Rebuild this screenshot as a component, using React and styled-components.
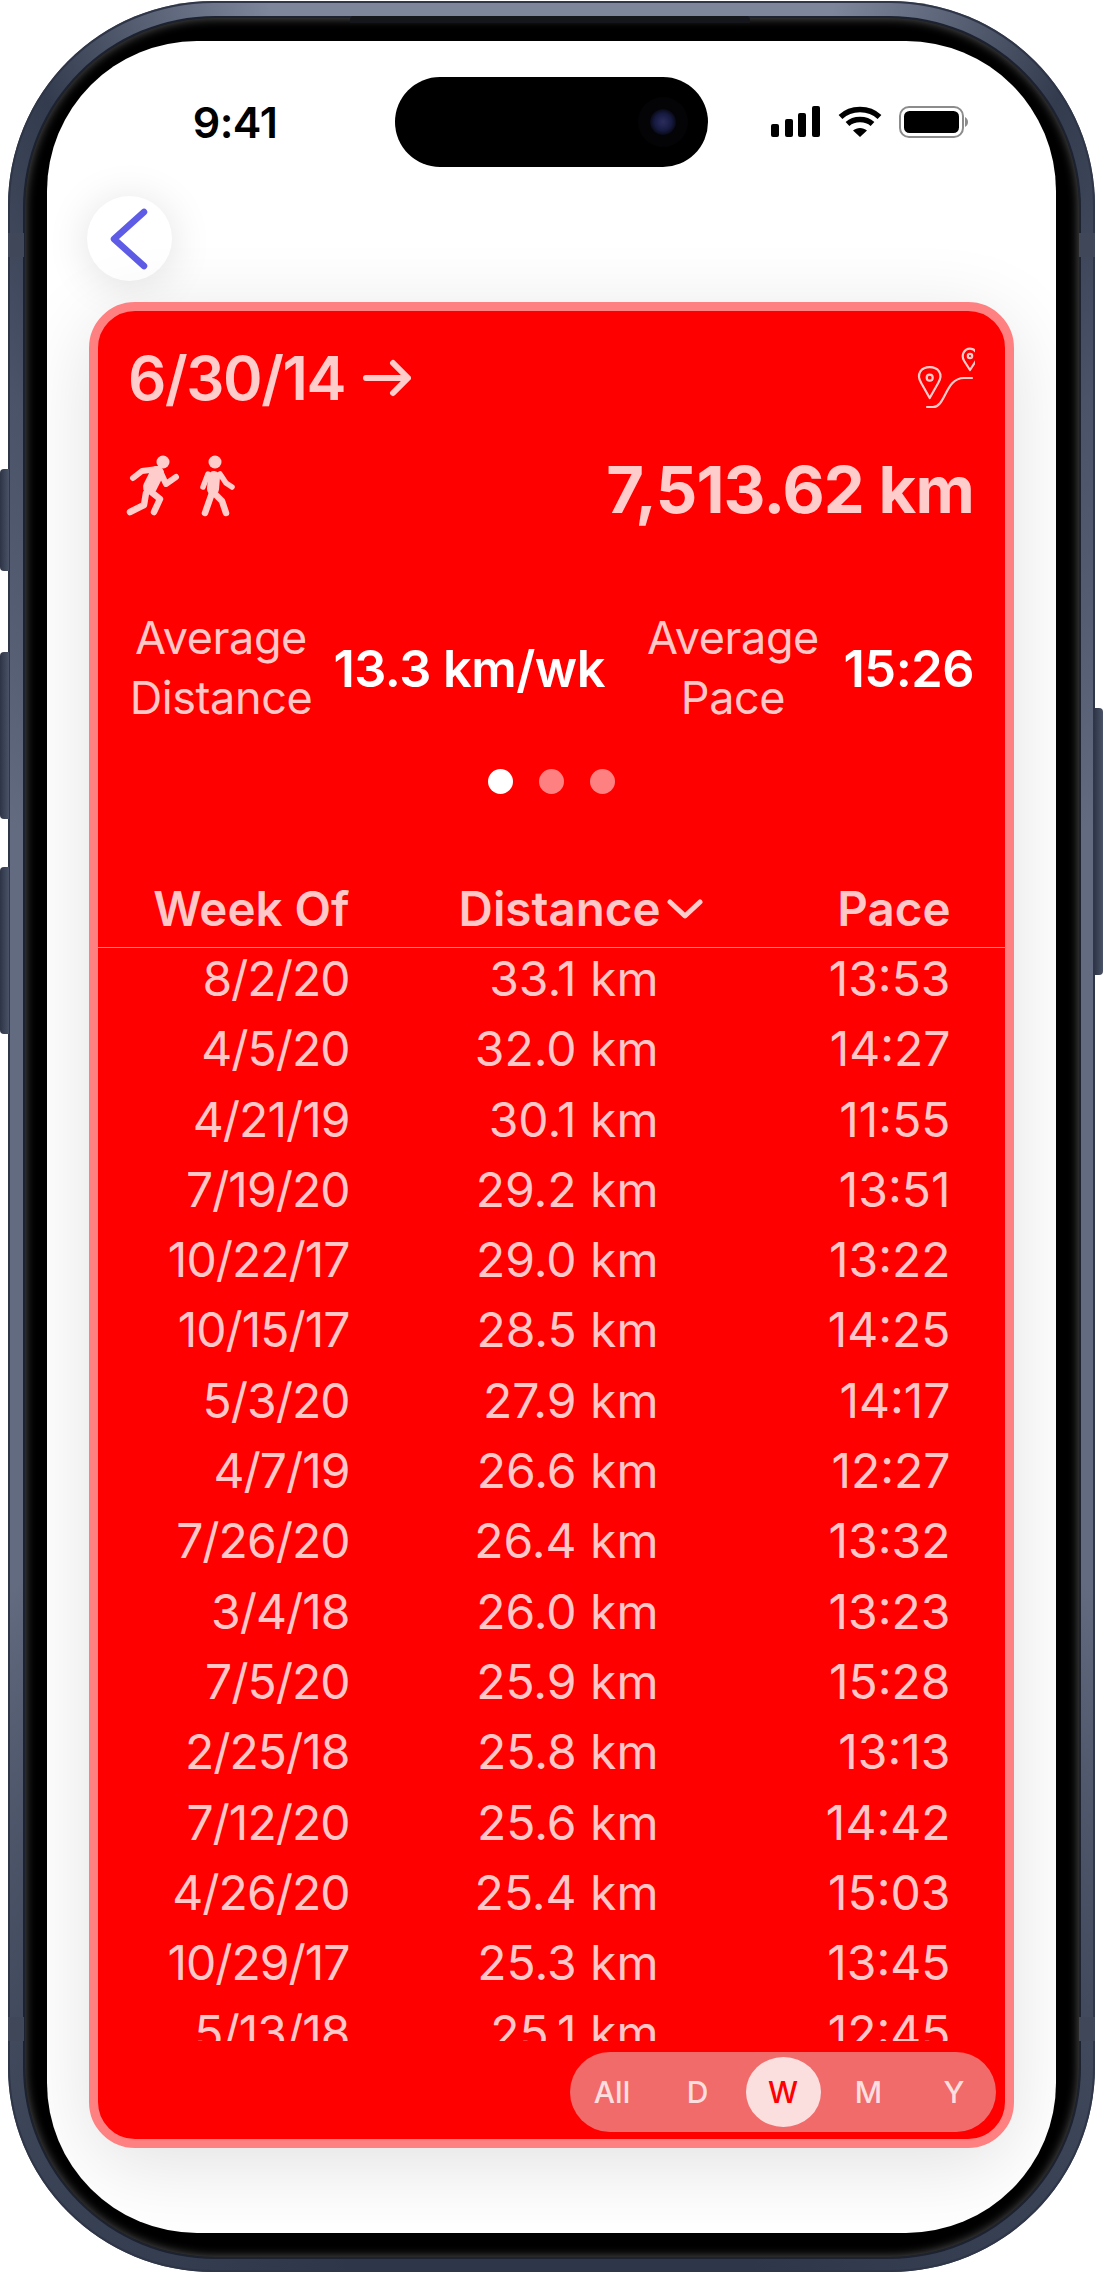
import React from "react";
import styled, { createGlobalStyle } from "styled-components";

const GlobalStyle = createGlobalStyle`
  html, body {
    margin: 0;
    background: #fff;
    font-family: "Inter", "Liberation Sans", sans-serif;
    -webkit-font-smoothing: antialiased;
  }
`;

const Phone = styled.div`
  position: relative;
  box-sizing: border-box;
  width: 1087px;
  height: 2271px;
  margin: 1px 0 3px 8px;
  padding: 17px 16px 15px 17px;
  border-radius: 205px;
  background: conic-gradient(
    from 0deg,
    #7d869b 0deg, #7d869b 14deg, #333b4e 26deg, #4a5368 36deg, #626b7f 60deg, #626b7f 130deg,
    #3c4558 152deg, #2e364a 170deg, #2e364a 190deg, #3c4558 208deg, #626b7f 230deg, #626b7f 300deg,
    #4a5368 324deg, #333b4e 334deg, #7d869b 346deg, #7d869b 360deg
  );
  box-shadow: inset 0 0 0 2px #2f3648;
`;

const SideButton = styled.div`
  position: absolute;
  top: ${props => props.$top}px;
  ${props => (props.$right ? "right: -8px;" : "left: -8px;")}
  width: 9px;
  height: ${props => props.$height}px;
  background: linear-gradient(90deg, #2d3446, #4a5367);
  border-radius: ${props => (props.$right ? "0 4px 4px 0" : "4px 0 0 4px")};
`;

const AntennaBand = styled.div`
  position: absolute;
  top: ${props => props.$top}px;
  ${props => (props.$right ? "right: 0;" : "left: 0;")}
  width: 16px;
  height: 24px;
  background: #3f4759;
`;

const SpeakerSlit = styled.div`
  position: absolute;
  top: 15px;
  left: 342px;
  width: 400px;
  height: 7px;
  background: #14161b;
  border-radius: 4px 4px 0 0;
`;

const Bezel = styled.div`
  box-sizing: border-box;
  width: 100%;
  height: 100%;
  padding: 23px 23px 24px 22px;
  background: #000;
  border-radius: 190px;
  box-shadow: 0 0 0 2px #1c2230, inset 0 0 10px 1px rgba(110, 110, 110, 0.7);
`;

const Screen = styled.div`
  height: 100%;
  display: flex;
  flex-direction: column;
  background: #fff;
  border-radius: 150px;
  overflow: hidden;
`;

const StatusBar = styled.div`
  display: grid;
  grid-template-columns: 348px 313px 348px;
  height: 90px;
  padding-top: 36px;
  align-items: center;
`;

const Clock = styled.div`
  padding-left: 28px;
  text-align: center;
  font-size: 43px;
  font-weight: 600;
  color: #000;
  letter-spacing: -0.5px;
`;

const Island = styled.div`
  height: 90px;
  display: flex;
  justify-content: flex-end;
  align-items: center;
  padding-right: 32px;
  background: #000;
  border-radius: 45px;
`;

const Lens = styled.div`
  width: 26px;
  height: 26px;
  border-radius: 50%;
  background: radial-gradient(circle, #2a2d5c 0%, #171b42 45%, #06070f 75%, #000 100%);
  box-shadow: 0 0 0 12px #040407;
`;

const StatusIcons = styled.div`
  display: flex;
  align-items: center;
  gap: 17px;
  padding-left: 60px;
`;

const BackButton = styled.div`
  display: flex;
  align-items: center;
  justify-content: center;
  width: 85px;
  height: 85px;
  margin: 29px 0 21px 40px;
  border-radius: 50%;
  background: #fff;
  box-shadow: 0 4px 44px rgba(0, 0, 0, 0.12);
`;

const Card = styled.div`
  position: relative;
  box-sizing: border-box;
  width: 925px;
  height: 1846px;
  margin-left: 42px;
  border: 9px solid #ff8080;
  border-radius: 46px;
  background: #ff0000;
  box-shadow: 0 16px 80px rgba(0, 0, 0, 0.12);
  overflow: hidden;
`;

const TitleRow = styled.div`
  display: flex;
  justify-content: space-between;
  align-items: center;
  height: 68px;
  margin-top: 33px;
  padding: 0 30px;
`;

const DateRange = styled.div`
  display: flex;
  align-items: center;
  gap: 18px;
  font-size: 60px;
  font-weight: 600;
  letter-spacing: -1.4px;
  color: rgba(255, 255, 255, 0.8);
`;

const TotalRow = styled.div`
  display: flex;
  justify-content: space-between;
  align-items: center;
  height: 70px;
  margin-top: 42px;
  padding: 0 31px 0 27px;
`;

const TotalValue = styled.div`
  font-size: 65px;
  font-weight: 700;
  letter-spacing: -0.8px;
  color: rgba(255, 255, 255, 0.8);
`;

const AverageRow = styled.div`
  display: grid;
  grid-template-columns: 184px 292px 256px 113px;
  align-items: center;
  margin-top: 84px;
  padding: 0 31px;
`;

const AverageLabel = styled.div`
  text-align: center;
  font-size: 45px;
  line-height: 60px;
  letter-spacing: -0.4px;
  color: rgba(255, 255, 255, 0.8);
`;

const AverageValue = styled.div`
  justify-self: end;
  white-space: nowrap;
  font-size: 50.5px;
  font-weight: 600;
  letter-spacing: -0.5px;
  color: #fff;
`;

const Dots = styled.div`
  display: flex;
  justify-content: center;
  gap: 26px;
  margin-top: 41px;
`;

const Dot = styled.div`
  width: 25px;
  height: 25px;
  border-radius: 50%;
  background: ${props => (props.$active ? "#fff" : "#ff8080")};
`;

const TableGrid = styled.div`
  display: grid;
  grid-template-columns: 251.5px 309px 292px;
  text-align: right;
  font-size: 48px;
  color: rgba(255, 255, 255, 0.8);
`;

const HeaderRow = styled(TableGrid)`
  height: 73px;
  padding-bottom: 2px;
  margin-top: 78px;
  align-items: center;
  font-size: 47.5px;
  font-weight: 600;
  border-bottom: 1px solid rgba(255, 255, 255, 0.5);
`;

const SortedHeader = styled.div`
  display: flex;
  justify-content: flex-end;
  align-items: center;
  gap: 6px;
  margin-right: -44px;
`;

const RowList = styled.div`
  height: 1097px;
  margin-top: -4px;
  overflow: hidden;
`;

const DataRow = styled(TableGrid)`
  height: 70.3px;
  line-height: 70.3px;
`;

const WeekCell = styled.div`
  letter-spacing: -1px;
`;

const RangePicker = styled.div`
  position: absolute;
  right: 9px;
  bottom: 7px;
  display: flex;
  align-items: center;
  gap: 10.5px;
  box-sizing: border-box;
  width: 426px;
  height: 80px;
  padding-left: 4.5px;
  border-radius: 40px;
  background: #f26b6b;
`;

const RangeItem = styled.div`
  flex: 0 0 75px;
  display: flex;
  align-items: center;
  justify-content: center;
  height: 70px;
  border-radius: 50%;
  font-size: 30px;
  font-weight: 500;
  color: ${props => (props.$active ? "#ff0000" : "rgba(255, 255, 255, 0.8)")};
  background: ${props => (props.$active ? "#fbdfdf" : "transparent")};
`;

const rows = [
  ["8/2/20", "33.1 km", "13:53"],
  ["4/5/20", "32.0 km", "14:27"],
  ["4/21/19", "30.1 km", "11:55"],
  ["7/19/20", "29.2 km", "13:51"],
  ["10/22/17", "29.0 km", "13:22"],
  ["10/15/17", "28.5 km", "14:25"],
  ["5/3/20", "27.9 km", "14:17"],
  ["4/7/19", "26.6 km", "12:27"],
  ["7/26/20", "26.4 km", "13:32"],
  ["3/4/18", "26.0 km", "13:23"],
  ["7/5/20", "25.9 km", "15:28"],
  ["2/25/18", "25.8 km", "13:13"],
  ["7/12/20", "25.6 km", "14:42"],
  ["4/26/20", "25.4 km", "15:03"],
  ["10/29/17", "25.3 km", "13:45"],
  ["5/13/18", "25.1 km", "12:45"],
];

const SignalIcon = () => (
  <svg width="53" height="32" viewBox="0 0 53 32" fill="#000">
    <rect x="3" y="18" width="8" height="13" rx="2" />
    <rect x="17" y="13" width="8" height="18" rx="2" />
    <rect x="30" y="7" width="8" height="24" rx="2" />
    <rect x="44" y="0" width="8" height="31" rx="2" />
  </svg>
);

const WifiIcon = () => (
  <svg width="44" height="32" viewBox="0 0 44 32" fill="none" stroke="#000" strokeWidth="5.5">
    <path d="M2.5 11 C13 1 31 1 41.5 11" />
    <path d="M9.5 18 C16 12 28 12 34.5 18" />
    <path d="M22 31 L15 24.5 C19 21 25 21 29 24.5 Z" fill="#000" stroke="none" />
  </svg>
);

const BatteryIcon = () => (
  <svg width="70" height="32" viewBox="0 0 70 32">
    <rect x="1" y="1" width="63" height="30" rx="9" fill="none" stroke="#8c8c8c" strokeWidth="2" />
    <rect x="5" y="5" width="55" height="22" rx="5.5" fill="#000" />
    <path d="M66 11 C68 12 69 14 69 16 C69 18 68 20 66 21 Z" fill="#8c8c8c" />
  </svg>
);

const BackChevron = () => (
  <svg width="40" height="62" viewBox="0 0 40 62" fill="none" stroke="#5e5ce6" strokeWidth="6.5" strokeLinecap="round" strokeLinejoin="round">
    <path d="M34 4 L4 31 L34 58" />
  </svg>
);

const RouteIcon = () => (
  <svg width="62" height="65" viewBox="20 15 62 65" fill="none" stroke="#fff" strokeOpacity="0.8" strokeWidth="2.2">
    <path d="M36.7 67 L28.2 52 C22.5 42 29 36.2 36.7 36.2 C44.4 36.2 51 42 45.2 52 Z" strokeLinejoin="round" />
    <circle cx="36.7" cy="46.7" r="3" />
    <path d="M77 39 L71.2 30 C67.5 24 71.5 17.6 77 17.6 C82.5 17.6 86.5 24 82.8 30 Z" strokeLinejoin="round" />
    <circle cx="77" cy="25" r="2.2" />
    <path d="M34 76 H40 C53 76 52 47 71 47 H79" strokeLinecap="round" />
  </svg>
);

const ActivityIcon = () => (
  <svg width="115" height="68" viewBox="25 28 115 68" fill="none" stroke="#ffcccc" strokeLinecap="round" strokeLinejoin="round">
    <circle cx="63" cy="35" r="6.5" fill="#ffcccc" stroke="none" />
    <path d="M33 51 L42 44 L58 42" strokeWidth="6" />
    <path d="M57 46 L50 60" strokeWidth="14" />
    <path d="M60 44 L66 57 L76 50" strokeWidth="6" />
    <path d="M46 66 L44 78 L30 85" strokeWidth="6.5" />
    <path d="M50 64 L60 72 L54 85" strokeWidth="6.5" />
    <circle cx="115" cy="35" r="6.5" fill="#ffcccc" stroke="none" />
    <path d="M114 50 L113 62" strokeWidth="12" />
    <path d="M108 47 L103 60" strokeWidth="5.5" />
    <path d="M120 47 L126 56 L132 60" strokeWidth="5.5" />
    <path d="M112 66 L105 86" strokeWidth="6.5" />
    <path d="M114 66 L122 74 L126 86" strokeWidth="6.5" />
  </svg>
);

const ArrowRight = () => (
  <svg width="48" height="42" viewBox="0 0 48 42" fill="none" stroke="#ffcccc" strokeWidth="6" strokeLinecap="round" strokeLinejoin="round">
    <path d="M3 21 H44 M30 6 L45 21 L30 36" />
  </svg>
);

const SortChevron = () => (
  <svg width="36" height="20" viewBox="0 0 36 20" fill="none" stroke="#ffcccc" strokeWidth="5" strokeLinecap="round" strokeLinejoin="round">
    <path d="M3 3 L18 17 L33 3" />
  </svg>
);

const App = () => (
  <>
    <GlobalStyle />
    <Phone>
      <SideButton $top={468} $height={102} />
      <SideButton $top={651} $height={167} />
      <SideButton $top={866} $height={167} />
      <SideButton $right $top={707} $height={267} />
      <AntennaBand $top={232} />
      <AntennaBand $right $top={232} />
      <AntennaBand $top={2016} />
      <AntennaBand $right $top={2016} />
      <SpeakerSlit />
      <Bezel>
        <Screen>
          <StatusBar>
            <Clock>9:41</Clock>
            <Island>
              <Lens />
            </Island>
            <StatusIcons>
              <SignalIcon />
              <WifiIcon />
              <BatteryIcon />
            </StatusIcons>
          </StatusBar>
          <BackButton>
            <BackChevron />
          </BackButton>
          <Card>
            <TitleRow>
              <DateRange>
                6/30/14
                <ArrowRight />
              </DateRange>
              <RouteIcon />
            </TitleRow>
            <TotalRow>
              <ActivityIcon />
              <TotalValue>7,513.62 km</TotalValue>
            </TotalRow>
            <AverageRow>
              <AverageLabel>
                Average
                <br />
                Distance
              </AverageLabel>
              <AverageValue>13.3 km/wk</AverageValue>
              <AverageLabel>
                Average
                <br />
                Pace
              </AverageLabel>
              <AverageValue>15:26</AverageValue>
            </AverageRow>
            <Dots>
              <Dot $active />
              <Dot />
              <Dot />
            </Dots>
            <HeaderRow>
              <div>Week Of</div>
              <SortedHeader>
                Distance
                <SortChevron />
              </SortedHeader>
              <div>Pace</div>
            </HeaderRow>
            <RowList>
              {rows.map(row => (
                <DataRow key={row[0]}>
                  <WeekCell>{row[0]}</WeekCell>
                  <div>{row[1]}</div>
                  <div>{row[2]}</div>
                </DataRow>
              ))}
            </RowList>
            <RangePicker>
              <RangeItem>All</RangeItem>
              <RangeItem>D</RangeItem>
              <RangeItem $active>W</RangeItem>
              <RangeItem>M</RangeItem>
              <RangeItem>Y</RangeItem>
            </RangePicker>
          </Card>
        </Screen>
      </Bezel>
    </Phone>
  </>
);

export default App;
